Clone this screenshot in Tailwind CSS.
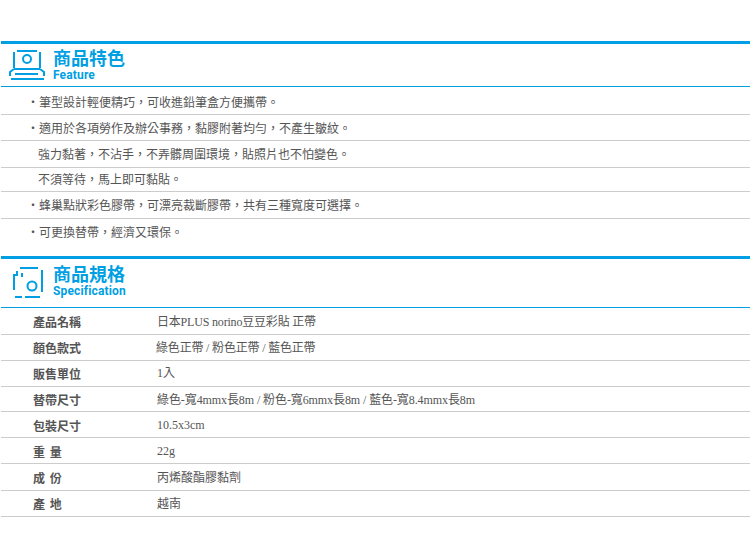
<!DOCTYPE html>
<html lang="zh-Hant">
<head>
<meta charset="UTF-8">
<title>商品特色</title>
<script src="https://cdn.jsdelivr.net/npm/@tailwindcss/browser@4"></script>
</head>
<body class="bg-white w-[750px] h-[551px] overflow-hidden font-['Liberation_Serif','Noto_Sans_CJK_TC',serif] text-[12px] text-[#555]">
<div class="pt-[41px] pl-px">

  <!-- feature -->
  <section class="box-content h-[42px] border-t-[3px] border-b border-t-[#009fe3] border-b-[#009fe3] flex items-start">
    <svg class="w-[38px] h-[34px] ml-[8px] mt-[4px]" viewBox="9 48 38 34" fill="none" stroke="#009fe3" stroke-width="2">
      <path d="M17 51H37M14 52V68M40 52V68M14 69H40M10 76V72L14 69M44 76V72L40 69M15 74H38M11 79H44" />
      <circle cx="27" cy="59" r="4" />
    </svg>
    <div class="ml-[6px] flex flex-col font-bold text-[#009fe3]">
      <div class="font-['Noto_Sans_CJK_TC',sans-serif] text-[18px] leading-[20px] mt-[3px]">商品特色</div>
      <div class="font-['Roboto',sans-serif] text-[12px] leading-[14px] mt-[1px] tracking-[0.15px]">Feature</div>
    </div>
  </section>
  <ul class="font-['Noto_Sans_CJK_TC',sans-serif] leading-[25px]">
    <li class="h-[28px] pt-[2px] border-b border-[#ccc] pl-[26px]">‧筆型設計輕便精巧&#65292;可收進鉛筆盒方便攜帶。</li>
    <li class="h-[26px] border-b border-[#ccc] pl-[26px]">‧適用於各項勞作及辦公事務&#65292;黏膠附著均勻&#65292;不產生皺紋。</li>
    <li class="h-[27px] border-b border-[#ccc] pl-[37px]">強力黏著&#65292;不沾手&#65292;不弄髒周圍環境&#65292;貼照片也不怕變色。</li>
    <li class="h-[24px] border-b border-[#ccc] pl-[37px] leading-[22px]">不須等待&#65292;馬上即可黏貼。</li>
    <li class="h-[27px] border-b border-[#ccc] pl-[26px]">‧蜂巢點狀彩色膠帶&#65292;可漂亮裁斷膠帶&#65292;共有三種寬度可選擇。</li>
    <li class="h-[26px] pl-[26px]">‧可更換替帶&#65292;經濟又環保。</li>
  </ul>

  <!-- spec -->
  <section class="box-content mt-[11px] h-[48px] border-t-[3px] border-b border-t-[#009fe3] border-b-[#009fe3] flex items-start">
    <svg class="w-[38px] h-[36px] ml-[8px] mt-[5px]" viewBox="9 264 38 36" fill="none" stroke="#009fe3" stroke-width="2">
      <path d="M20 268H38M14 290V275H17V271M22 273V277M42 270V292M15 297H22M25 297H40" />
      <circle cx="32" cy="286" r="4.5" />
    </svg>
    <div class="ml-[6px] flex flex-col font-bold text-[#009fe3]">
      <div class="font-['Noto_Sans_CJK_TC',sans-serif] text-[18px] leading-[20px] mt-[4px]">商品規格</div>
      <div class="font-['Roboto',sans-serif] text-[12px] leading-[14px] mt-[1px] tracking-[0.15px]">Specification</div>
    </div>
  </section>
  <dl class="leading-[25px] [&>div]:flex [&>div]:pl-[32px] [&>div]:border-b [&>div]:border-[#ccc] [&_dt]:w-[124px] [&_dt]:shrink-0 [&_dt]:font-bold [&_dt]:font-['Noto_Sans_CJK_TC',sans-serif] [&_dt]:whitespace-pre [&_dt]:[word-spacing:2px]">
    <div class="h-[27px] pt-[2px]"><dt class="-mt-px">產品名稱</dt><dd class="tracking-[-0.19px]">日本PLUS norino豆豆彩貼 正帶</dd></div>
    <div class="h-[26px]"><dt>顏色款式</dt><dd class="pt-px tracking-[-0.18px] -ml-px">綠色正帶 / 粉色正帶 / 藍色正帶</dd></div>
    <div class="h-[26px]"><dt>販售單位</dt><dd>1入</dd></div>
    <div class="h-[25px]"><dt>替帶尺寸</dt><dd class="pt-px tracking-[-0.09px]">綠色-寬4mmx長8m / 粉色-寬6mmx長8m / 藍色-寬8.4mmx長8m</dd></div>
    <div class="h-[26px]"><dt class="pt-px">包裝尺寸</dt><dd class="pt-px">10.5x3cm</dd></div>
    <div class="h-[26px]"><dt class="pt-px">重 量</dt><dd class="pt-px">22g</dd></div>
    <div class="h-[27px]"><dt class="pt-px">成 份</dt><dd class="pt-[2px]">丙烯酸酯膠黏劑</dd></div>
    <div class="h-[26px]"><dt>產 地</dt><dd class="pt-px">越南</dd></div>
  </dl>
</div>
</body>
</html>
